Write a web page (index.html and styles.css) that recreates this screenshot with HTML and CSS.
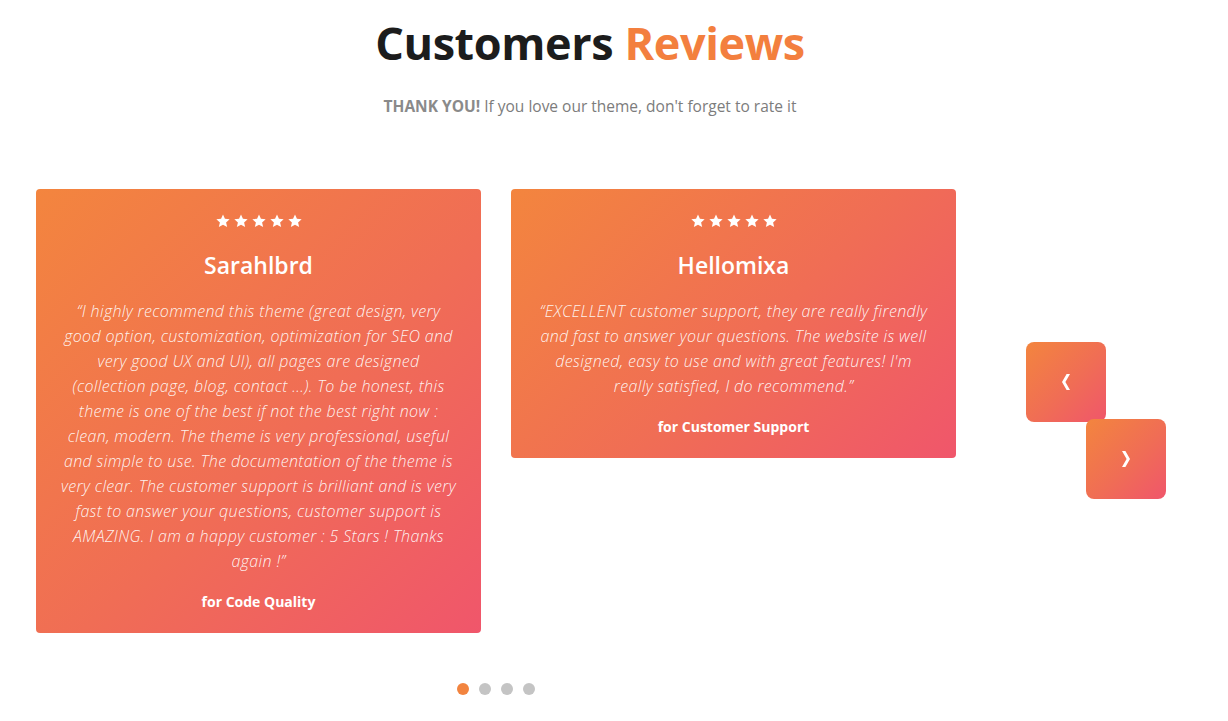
FILE: index.html
```html
<!DOCTYPE html>
<html lang="en">
<head>
<meta charset="utf-8" />
<title>Customers Reviews</title>
<link rel="stylesheet" href="styles.css">
</head>

<body>
	<svg class="defs" width="0" height="0">
		<symbol id="star" viewBox="0 0 24 24">
			<path d="M12 0.8l3.3 7.4 8.1.8-6.1 5.4 1.8 8L12 18.3l-7.1 4.1 1.8-8L.6 9l8.1-.8z" />
		</symbol>
	</svg>

	<div class="page">
		<div class="pageTitle">
			<h1>Customers <span>Reviews</span></h1>
			<p><b>THANK YOU!</b> If you love our theme, don't forget to rate it</p>
		</div>

		<div class="reviews">
			<div class="slider">
				<div class="cards">
					<div class="review">
						<div class="stars">
							<svg><use href="#star" /></svg><svg><use href="#star" /></svg><svg><use href="#star" /></svg><svg><use href="#star" /></svg><svg><use href="#star" /></svg>
						</div>
						<h3>Sarahlbrd</h3>
						<p class="quote">&ldquo;I highly recommend this theme (great design, very good option, customization, optimization for SEO and very good UX and UI), all pages are designed (collection page, blog, contact ...). To be honest, this theme is one of the best if not the best right now : clean, modern. The theme is very professional, useful and simple to use. The documentation of the theme is very clear. The customer support is brilliant and is very fast to answer your questions, customer support is AMAZING. I am a happy customer : 5 Stars ! Thanks again !&rdquo;</p>
						<p class="for">for Code Quality</p>
					</div>

					<div class="review">
						<div class="stars">
							<svg><use href="#star" /></svg><svg><use href="#star" /></svg><svg><use href="#star" /></svg><svg><use href="#star" /></svg><svg><use href="#star" /></svg>
						</div>
						<h3>Hellomixa</h3>
						<p class="quote">&ldquo;EXCELLENT customer support, they are really firendly and fast to answer your questions. The website is well designed, easy to use and with great features! I'm really satisfied, I do recommend.&rdquo;</p>
						<p class="for">for Customer Support</p>
					</div>
				</div>

				<div class="dots">
					<span class="active"></span><span></span><span></span><span></span>
				</div>
			</div>

			<div class="nav">
				<button class="prev" aria-label="Previous">
					<svg width="8" height="16" viewBox="0 0 8 16"><polygon points="4.6,0 8,0 3.4,8 8,16 4.6,16 0,8" /></svg>
				</button>
				<button class="next" aria-label="Next">
					<svg width="8" height="16" viewBox="0 0 8 16"><polygon points="3.4,0 0,0 4.6,8 0,16 3.4,16 8,8" /></svg>
				</button>
			</div>
		</div>
	</div>
</body>
</html>
```

FILE: styles.css
```css
body {
	margin: 0;
	background: #fff;
	font-family: "Open Sans", Arial, Helvetica, sans-serif;
	color: #777;
}

.defs {
	position: absolute;
}

.page {
	width: 1180px;
}

.pageTitle {
	text-align: center;
	padding-top: 15px;
}

.pageTitle h1 {
	font-size: 45px;
	line-height: 56px;
	font-weight: 700;
	letter-spacing: -0.4px;
	color: #1c1c1c;
	margin: 0;
}

.pageTitle h1 span {
	color: #f37f3e;
}

.pageTitle p {
	font-size: 15.5px;
	line-height: 24px;
	margin: 23px 0 0;
	color: #7c7c7c;
}

.pageTitle p b {
	color: #8a8a8a;
}

.reviews {
	display: flex;
	align-items: flex-start;
	padding: 71px 14px 0 36px;
	gap: 70px;
}

.slider {
	width: 920px;
}

.cards {
	display: flex;
	align-items: flex-start;
	gap: 30px;
}

.review {
	width: 445px;
	box-sizing: border-box;
	padding: 25px 23px 21px;
	border-radius: 4px;
	background: linear-gradient(135deg, #f3853e 0%, #f06d55 55%, #f0566b 100%);
	color: #fff;
	text-align: center;
}

.stars {
	display: flex;
	justify-content: center;
	gap: 4px;
	height: 14px;
}

.stars svg {
	width: 14px;
	height: 14px;
	fill: #fff;
}

.review h3 {
	font-size: 23px;
	line-height: 30px;
	font-weight: 600;
	margin: 22px 0 0;
}

.review .quote {
	font-size: 16px;
	line-height: 25px;
	letter-spacing: 0.35px;
	font-style: italic;
	font-weight: 300;
	color: rgba(255, 255, 255, 0.92);
	margin: 19px 0 0;
}

.review .for {
	font-size: 14px;
	line-height: 20px;
	font-weight: 700;
	margin: 18px 0 0;
}

.dots {
	display: flex;
	justify-content: center;
	gap: 10px;
	margin-top: 50px;
}

.dots span {
	width: 12px;
	height: 12px;
	border-radius: 50%;
	background: #c4c4c4;
}

.dots span.active {
	background: #f2843f;
}

.nav {
	display: flex;
	flex-direction: column;
	margin-top: 153px;
}

.nav button {
	width: 80px;
	height: 80px;
	border: 0;
	padding: 0;
	border-radius: 8px;
	background: linear-gradient(135deg, #f3853e 0%, #f06d55 55%, #f0566b 100%);
	display: flex;
	align-items: center;
	justify-content: center;
	cursor: pointer;
}

.nav button svg {
	fill: #fff;
}

.nav .next {
	margin: -3px 0 0 60px;
}
```
